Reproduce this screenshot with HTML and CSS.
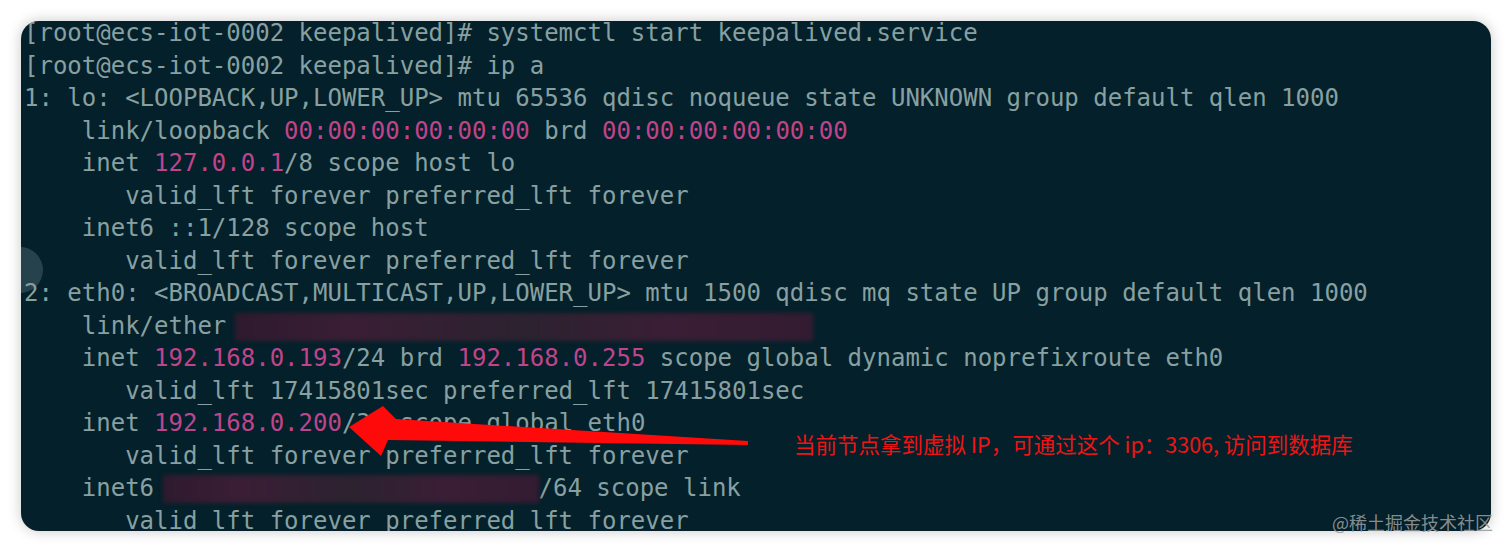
FILE: index.html
```html
<!DOCTYPE html>
<html lang="zh">
<head>
<meta charset="utf-8">
<title>keepalived ip a</title>
<link rel="stylesheet" href="styles.css">
</head>
<body>
<div class="page">
  <div class="term">
    <span class="knob"></span>
<pre class="screen">[root@ecs-iot-0002 keepalived]# systemctl start keepalived.service
[root@ecs-iot-0002 keepalived]# ip a
1: lo: &lt;LOOPBACK,UP,LOWER_UP&gt; mtu 65536 qdisc noqueue state UNKNOWN group default qlen 1000
    link/loopback <span class="m">00:00:00:00:00:00</span> brd <span class="m">00:00:00:00:00:00</span>
    inet <span class="m">127.0.0.1</span>/8 scope host lo
       valid_lft forever preferred_lft forever
    inet6 ::1/128 scope host
       valid_lft forever preferred_lft forever
2: eth0: &lt;BROADCAST,MULTICAST,UP,LOWER_UP&gt; mtu 1500 qdisc mq state UP group default qlen 1000
    link/ether <span class="blur blur-mac"></span>
    inet <span class="m">192.168.0.193</span>/24 brd <span class="m">192.168.0.255</span> scope global dynamic noprefixroute eth0
       valid_lft 17415801sec preferred_lft 17415801sec
    inet <span class="m">192.168.0.200</span>/32 scope global eth0
       valid_lft forever preferred_lft forever
    inet6 <span class="blur blur-v6"></span>/64 scope link
       valid_lft forever preferred_lft forever</pre>
  </div>
  <svg class="arrow" viewBox="0 0 1512 553" width="1512" height="553" aria-hidden="true">
    <polygon points="349,427 383,406 396,419 748,441 748,445 388,440 381,456" fill="#ff0a0a"/>
  </svg>
  <div class="note">当前节点拿到虚拟 IP，可通过这个 ip：3306, 访问到数据库</div>
  <div class="mark">@稀土掘金技术社区</div>
</div>
</body>
</html>
```
FILE: styles.css
```css
html, body {
  margin: 0;
  padding: 0;
  background: #ffffff;
}

.page {
  position: relative;
  width: 1512px;
  height: 553px;
  padding: 21px 21px 22px 21px;
  box-sizing: border-box;
  overflow: hidden;
}

.term {
  position: relative;
  height: 510px;
  background: #04202a;
  border-radius: 18px;
  overflow: hidden;
  box-shadow: 0 0 14px rgba(0, 0, 0, 0.22);
}

.screen {
  margin: -4px 0 0 0;
  padding: 0 0 0 3px;
  font-family: "DejaVu Sans Mono", "Liberation Mono", monospace;
  font-size: 24px;
  line-height: 32.5px;
  color: #88a0a1;
  white-space: pre;
}

.m {
  color: #c0448a;
}

.blur {
  display: inline-block;
  vertical-align: -7px;
  height: 28px;
  background: linear-gradient(90deg, #2e1a2e 0%, #3a1e35 20%, #2c2230 50%, #3a1e35 75%, #331c32 100%);
  filter: blur(2px);
}

.blur-mac {
  width: 578px;
  margin-left: -6px;
}

.blur-v6 {
  width: 376px;
  margin-left: -6px;
}

.knob {
  position: absolute;
  left: -24px;
  top: 226px;
  width: 46px;
  height: 46px;
  border-radius: 50%;
  background: rgba(120, 150, 160, 0.3);
}

.arrow {
  position: absolute;
  left: 0;
  top: 0;
}

.note {
  position: absolute;
  left: 794px;
  top: 429px;
  font-family: "Noto Sans CJK SC", "Noto Sans", sans-serif;
  font-size: 21.5px;
  line-height: 30px;
  color: #ee1414;
  white-space: nowrap;
}

.mark {
  position: absolute;
  left: 1332px;
  top: 509px;
  font-family: "Noto Sans CJK SC", "Noto Sans", sans-serif;
  font-size: 18px;
  line-height: 26px;
  color: rgba(150, 155, 158, 0.9);
  white-space: nowrap;
}
```
